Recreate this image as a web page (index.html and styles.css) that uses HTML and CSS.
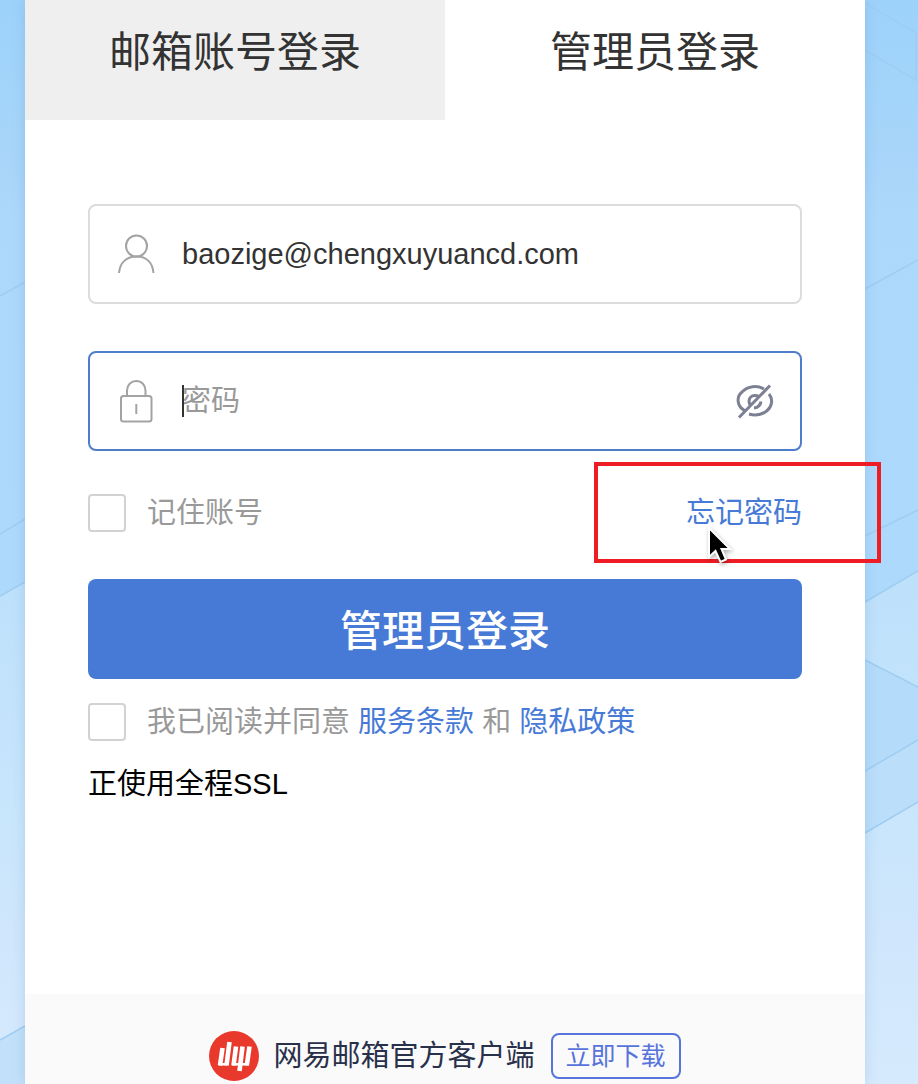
FILE: index.html
```html
<!DOCTYPE html>
<html lang="zh-CN">
<head>
<meta charset="utf-8">
<meta name="viewport" content="width=device-width, initial-scale=1">
<title>管理员登录</title>
<link rel="stylesheet" href="styles.css">
</head>
<body>
<svg class="backdrop" viewBox="0 0 918 1084" preserveAspectRatio="none" aria-hidden="true">
  <defs>
    <linearGradient id="sky" x1="0" y1="0" x2="0" y2="1">
      <stop offset="0" stop-color="#9dd2fb"/>
      <stop offset="0.07" stop-color="#a2d4fa"/>
      <stop offset="0.15" stop-color="#a8d5f9"/>
      <stop offset="0.2" stop-color="#acd8fb"/>
      <stop offset="0.55" stop-color="#add9fc"/>
    </linearGradient>
    <linearGradient id="haze" x1="0" y1="0" x2="0" y2="1">
      <stop offset="0" stop-color="#bde0fb"/>
      <stop offset="0.5" stop-color="#c9e6fc"/>
      <stop offset="0.7" stop-color="#cfe6fc"/>
      <stop offset="1" stop-color="#d6eafd"/>
    </linearGradient>
  </defs>
  <path fill="url(#sky)" d="M0 0H918V1084H0z"/>
  <path fill="url(#haze)" d="M0 596L25 582H865V602L918 571V1084H0z"/>
  <path fill="#b4dbfa" d="M865 660L918 687V802L865 833z"/>
  <path fill="#bbdefa" d="M865 771L918 740V802L865 833z"/>
  <path fill="#c2e0fa" d="M0 1040L25 1026V1084H0z"/>
  <g fill="none" stroke="#9fcdf2" stroke-width="1.500">
    <path d="M0 296L25 282M0 534L25 519M0 596L25 582M0 1040L25 1026"/>
    <path d="M865 3L916 33V80L865 50M865 289L918 260M865 536L918 510M865 602L918 571M865 660L918 687M865 771L918 740M865 833L918 802"/>
  </g>
</svg>
<main class="panel">
  <div class="tabs" role="tablist">
    <button class="tab" type="button" role="tab" aria-selected="false">邮箱账号登录</button>
    <button class="tab tab-active" type="button" role="tab" aria-selected="true">管理员登录</button>
  </div>
  <form class="form">
    <div class="field">
      <svg class="field-icon" viewBox="0 0 40 44" aria-hidden="true">
        <circle cx="20.500" cy="14" r="10.500"/>
        <path d="M3 41C4 30 11 24.500 20.500 24.500S36.500 30 37.500 41"/>
      </svg>
      <input class="field-input" type="text" aria-label="管理员账号" value="baozige@chengxuyuancd.com">
    </div>
    <div class="field field-focus">
      <svg class="field-icon" viewBox="0 0 40 44" aria-hidden="true">
        <rect x="5" y="17" width="30.500" height="25.500" rx="2.500"/>
        <path d="M11 17V11.500C11 6 15 2 20.300 2S29.500 6 29.500 11.500V17M20.300 25V35"/>
      </svg>
      <div class="password">
        <input class="field-input" type="password" aria-label="密码" placeholder="密码">
        <span class="caret"></span>
      </div>
      <button class="reveal" type="button" aria-label="显示密码">
        <svg class="reveal-icon" viewBox="0 0 38 36" aria-hidden="true">
          <path d="M8.500 27.500C1 23 0 14 6 9C12 3 21 2 28 6M33 11C37.500 16.500 36 24 30 28.500C25 32 18 32.500 13 31"/>
          <path d="M14 22C11 15 16 10.500 23 13.500M25 18.500C24.500 22 22 24.500 18 25"/>
          <path d="M3 34.500L34 2.500"/>
        </svg>
      </button>
    </div>
    <div class="options">
      <label class="check"><input class="box" type="checkbox">记住账号</label>
      <a class="link" href="#forgot">忘记密码</a>
      <span class="highlight"></span>
      <svg class="pointer" viewBox="0 0 28 38" aria-hidden="true">
        <path d="M3 2V31L9.500 25L14.500 36L20 33.500L15.500 23H24z"/>
      </svg>
    </div>
    <button class="submit" type="submit">管理员登录</button>
    <div class="check terms">
      <input class="box" type="checkbox" id="agree">
      <span class="consent"><label for="agree">我已阅读并同意</label> <a class="link" href="#terms">服务条款</a> 和 <a class="link" href="#privacy">隐私政策</a></span>
    </div>
    <p class="ssl">正使用全程SSL</p>
  </form>
  <footer class="footer">
    <svg class="logo" viewBox="0 0 50 50" aria-hidden="true">
      <circle cx="25" cy="25" r="25" fill="#e8392c"/>
      <path fill="none" stroke="#fff" stroke-width="4.600" d="M13.500 17L11 34.500M20.500 11L17.500 34.500M27 15.500L24.500 34.500M33.500 15.500L30.500 40M40.500 15.500L37.800 34.500"/>
      <path fill="none" stroke="#fff" stroke-width="2.500" d="M10 33.200H18M23 33.200H39"/>
    </svg>
    <span class="client">网易邮箱官方客户端</span>
    <a class="download" href="#download">立即下载</a>
  </footer>
</main>
</body>
</html>
```
FILE: styles.css
```css
* {
  box-sizing: border-box;
}

body {
  position: relative;
  display: flex;
  min-height: 100vh;
  margin: 0;
  overflow-x: hidden;
  font-family: "Liberation Sans", "Noto Sans CJK SC", sans-serif;
  font-size: 29px;
  color: #333;
}

button,
input {
  margin: 0;
  font: inherit;
}

.backdrop {
  position: absolute;
  inset: 0;
  width: 100%;
  height: 100%;
  z-index: -1;
}

.panel {
  display: flex;
  flex: 1;
  flex-direction: column;
  min-width: 0;
  margin: 0 53px 0 25px;
  background: #fff;
  box-shadow: 0 0 12px rgba(70, 120, 170, 0.2);
}

.tabs {
  display: grid;
  grid-template-columns: 1fr 1fr;
}

.tab {
  padding: 23px 0 37px;
  border: 0;
  background: #efefef;
  font-size: 42px;
  line-height: 60px;
  color: #333;
}

.tab-active {
  background: #fff;
}

.form {
  display: flex;
  flex: 1;
  flex-direction: column;
  padding: 84px 63px 0;
}

.field {
  display: flex;
  align-items: center;
  height: 100px;
  margin-bottom: 47px;
  padding: 0 26px;
  border: 2px solid #dcdcdc;
  border-radius: 8px;
  background: #fff;
}

.field-focus {
  margin-bottom: 43px;
  border-color: #4d7dcb;
}

.field-icon {
  flex: none;
  width: 40px;
  height: 44px;
  margin-right: 26px;
  fill: none;
  stroke: #a3a3a3;
  stroke-width: 2;
}

.field-input {
  flex: 1;
  width: 100%;
  min-width: 0;
  padding: 0;
  border: 0;
  outline: 0;
  background: transparent;
  color: #333;
}

.field-input::placeholder {
  color: #999;
  opacity: 1;
}

.password {
  position: relative;
  display: flex;
  flex: 1;
  align-items: center;
  height: 38px;
}

.caret {
  position: absolute;
  top: 3px;
  left: 0;
  width: 2px;
  height: 32px;
  background: #333;
}

.reveal {
  display: flex;
  padding: 0;
  border: 0;
  background: none;
}

.reveal-icon {
  width: 38px;
  height: 36px;
  fill: none;
  stroke: #7c8092;
  stroke-width: 3;
}

.options {
  position: relative;
  display: flex;
  align-items: center;
  justify-content: space-between;
  height: 38px;
  margin-bottom: 47px;
}

.check {
  display: flex;
  align-items: center;
  gap: 21px;
  height: 38px;
  line-height: 38px;
  color: #999;
}

.box {
  flex: none;
  width: 38px;
  height: 38px;
  border: 2px solid #d2d2d2;
  border-radius: 4px;
  background: #fff;
  appearance: none;
}

.box:checked {
  background: #477ad7;
}

.link {
  line-height: 38px;
  color: #477ad7;
  text-decoration: none;
}

.highlight {
  position: absolute;
  top: -32px;
  right: -79px;
  width: 287px;
  height: 101px;
  border: 4px solid #ee1c24;
  pointer-events: none;
}

.pointer {
  position: absolute;
  top: 32px;
  right: 68px;
  width: 28px;
  height: 38px;
  fill: #000;
  stroke: #fff;
  stroke-width: 2;
  filter: drop-shadow(1px 2px 2px rgba(0, 0, 0, 0.3));
  pointer-events: none;
}

.submit {
  height: 100px;
  padding: 0 0 4px;
  border: 0;
  border-radius: 8px;
  background: #477ad7;
  font-size: 42px;
  font-weight: 500;
  color: #fff;
}

.terms {
  margin-top: 24px;
}

.consent {
  white-space: nowrap;
}

.ssl {
  margin: 24px 0;
  line-height: 38px;
  color: #000;
}

.footer {
  display: flex;
  justify-content: center;
  align-items: center;
  padding: 37px 0 3px;
  background: #fafafa;
  color: #29304a;
}

.logo {
  width: 50px;
  height: 50px;
  margin-right: 14px;
}

.client {
  margin-right: 16px;
  line-height: 38px;
}

.download {
  padding: 0 13px;
  border: 2px solid #5674dc;
  border-radius: 8px;
  font-size: 25px;
  line-height: 42px;
  color: #5674dc;
  text-decoration: none;
}
```
